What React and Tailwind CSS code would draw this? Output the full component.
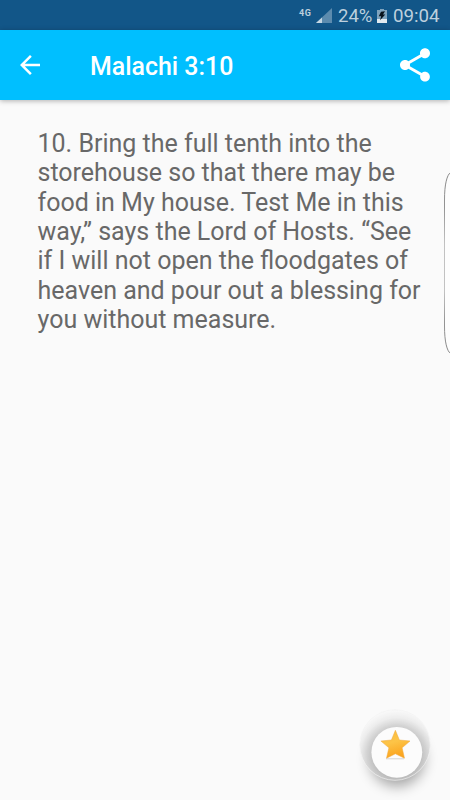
const VERSE_LINES = [
  '10. Bring the full tenth into the',
  'storehouse so that there may be',
  'food in My house. Test Me in this',
  'way,” says the Lord of Hosts. “See',
  'if I will not open the floodgates of',
  'heaven and pour out a blessing for',
  'you without measure.',
];

function StatusBar() {
  return (
    <div className="flex h-[30px] shrink-0 items-center bg-[#125688] pl-[299px] text-[#bdd0de]">
      <span className="mb-[4px] w-[17px] text-[9px] leading-none font-bold tracking-[0.5px]">4G</span>
      <svg className="mt-[1px] h-4 w-4" viewBox="0 0 16 16">
        <path d="M16 0V15H0Z" fill="#5c8bae" />
        <path d="M6 9.4V15H0Z" fill="#c6d7e3" />
      </svg>
      <span className="mt-[2px] ml-[6px] w-[39px] text-[18.5px] leading-none whitespace-nowrap">24%</span>
      <svg className="mt-[1px] h-4 w-[10px]" viewBox="0 0 10 16">
        <path d="M3 1H7V2H10V12H0V2H3Z" fill="#7fa3bd" />
        <path d="M0 11H10V15H0Z" fill="#e2eaf0" />
        <path d="M4 3.8L8 3.2L6 6.4H8.3L3 12.2L4.2 8.2H1.8Z" fill="#08121b" />
      </svg>
      <span className="mt-[2px] ml-[6px] text-[18.7px] leading-none whitespace-nowrap">09:04</span>
    </div>
  );
}

function AppBar() {
  return (
    <header className="z-10 flex h-[70px] shrink-0 items-center bg-[#00bfff] pr-[15px] pl-[15px] text-white shadow-[0_1px_5px_rgba(0,0,0,0.3)]">
      <svg className="h-[30px] w-[30px]" viewBox="0 0 24 24" fill="currentColor">
        <path d="M20 11H7.83l5.59-5.59L12 4l-8 8 8 8 1.41-1.41L7.83 13H20v-2z" />
      </svg>
      <h1 className="mt-[3px] ml-[45px] flex-1 text-[24.9px] leading-[25px] font-medium">Malachi 3:10</h1>
      <svg className="h-10 w-10" viewBox="0 0 24 24" fill="currentColor">
        <path d="M18 16.08c-.76 0-1.44.3-1.96.77L8.91 12.7c.05-.23.09-.46.09-.7s-.04-.47-.09-.7l7.05-4.11c.54.5 1.25.81 2.04.81 1.66 0 3-1.34 3-3s-1.34-3-3-3-3 1.34-3 3c0 .24.04.47.09.7L8.04 9.81C7.5 9.31 6.79 9 6 9c-1.66 0-3 1.34-3 3s1.34 3 3 3c.79 0 1.5-.31 2.04-.81l7.12 4.16c-.05.21-.08.43-.08.65 0 1.61 1.31 2.92 2.92 2.92s2.92-1.31 2.92-2.92-1.31-2.92-2.92-2.92z" />
      </svg>
    </header>
  );
}

function FavoriteButton() {
  return (
    <button className="absolute top-[698px] left-[345px] h-[102px] w-[105px]" aria-label="Favorite">
      <svg className="h-[102px] w-[105px]" viewBox="0 0 105 102">
        <defs>
          <radialGradient id="ring" gradientUnits="userSpaceOnUse" cx="52" cy="57" r="44">
            <stop offset="0.5" stopColor="#bcbcbc" />
            <stop offset="0.68" stopColor="#d0d0d0" />
            <stop offset="0.85" stopColor="#ececec" />
            <stop offset="1" stopColor="#f8f8f8" />
          </radialGradient>
          <linearGradient id="gold" x1="0" y1="0" x2="0.3" y2="1">
            <stop offset="0" stopColor="#f9bb3c" />
            <stop offset="0.5" stopColor="#fdc447" />
            <stop offset="1" stopColor="#fba51f" />
          </linearGradient>
          <filter id="soft" x="-60%" y="-60%" width="220%" height="220%">
            <feGaussianBlur stdDeviation="7" />
          </filter>
        </defs>
        <circle cx="52" cy="61" r="27" fill="#000" opacity="0.36" filter="url(#soft)" />
        <circle cx="50" cy="47" r="35.3" fill="url(#ring)" stroke="#f3f3f3" strokeWidth="0.8" opacity="0.85" />
        <circle cx="51.8" cy="54.3" r="25.4" fill="#fcfcfc" />
        <path d="M41 60.8H59" stroke="#999" strokeWidth="0.8" opacity="0.5" />
        <path
          d="M50.4 32.3L54.4 42L65 43L57.1 49.8L59.5 60.2L50.4 55.8L41.5 60.2L43.9 49.8L35.9 43L46.4 42Z"
          fill="url(#gold)"
          stroke="#efa840"
          strokeWidth="0.5"
          strokeLinejoin="round"
        />
      </svg>
    </button>
  );
}

export default function App() {
  return (
    <div className="relative flex h-[800px] w-[450px] flex-col overflow-hidden bg-[#fafafa] font-['Roboto',sans-serif]">
      <StatusBar />
      <AppBar />
      <main className="pt-[29px] pl-[37.5px] text-[25px] leading-[29.35px] text-[#686868]">
        {VERSE_LINES.map((line) => (
          <p key={line} className="whitespace-nowrap">{line}</p>
        ))}
      </main>
      <svg className="absolute top-[170px] left-[442px] h-[186px] w-2" viewBox="0 0 8 186" fill="none">
        <defs>
          <linearGradient id="edge" gradientUnits="userSpaceOnUse" x1="0" y1="0" x2="0" y2="186">
            <stop offset="0" stopColor="#777" />
            <stop offset="0.2" stopColor="#888" />
            <stop offset="0.4" stopColor="#bbb" />
            <stop offset="0.65" stopColor="#bbb" />
            <stop offset="0.82" stopColor="#888" />
            <stop offset="1" stopColor="#777" />
          </linearGradient>
        </defs>
        <path d="M8.5 2.5C5 5 2.5 14 2.5 30V156C2.5 172 5 181 8.5 183.5Z" fill="#fdfdfd" stroke="url(#edge)" strokeWidth="0.9" />
      </svg>
      <FavoriteButton />
    </div>
  );
}
